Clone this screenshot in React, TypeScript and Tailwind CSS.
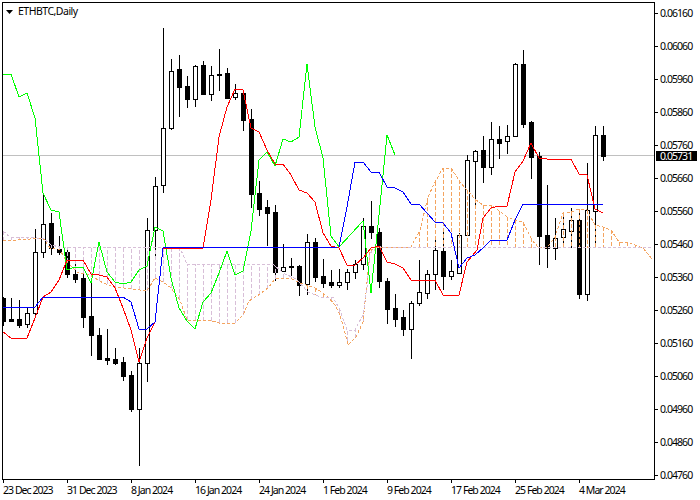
const PRICES = ["0.06160","0.06060","0.05960","0.05860","0.05760","0.05660","0.05560","0.05460","0.05360","0.05260","0.05160","0.05060","0.04960","0.04860","0.04760"];
const DATES = ["23 Dec 2023","31 Dec 2023","8 Jan 2024","16 Jan 2024","24 Jan 2024","1 Feb 2024","9 Feb 2024","17 Feb 2024","25 Feb 2024","4 Mar 2024"];

// high, low, body top, body bottom, black body (1) or white (0), in pixels
const CANDLES: number[][] = [
  [297,326,298,321,1],[298,322,319,321,1],[300,328,319,325,1],[308,328,313,324,0],[229,317,252,313,0],
  [193,258,224,252,0],[213,255,223,248,1],[236,255,249,252,1],[248,278,252,274,1],[260,283,274,279,1],
  [270,328,278,317,1],[283,356,316,335,1],[328,359,335,359,1],[329,365,358,360,1],[348,365,359,363,1],
  [357,381,362,376,1],[371,412,375,409,1],[348,466,363,409,0],[218,382,230,363,0],[177,258,186,230,0],
  [28,193,128,185,0],[59,130,71,128,0],[55,117,69,87,1],[76,108,86,99,1],[65,107,66,99,0],
  [61,95,65,94,1],[66,101,75,94,0],[49,91,74,75,1],[68,99,73,98,1],[84,100,93,97,0],
  [90,131,93,120,1],[109,208,119,194,1],[181,216,193,209,1],[200,246,207,213,1],[205,281,212,272,1],
  [244,272,267,271,0],[258,276,266,267,1],[265,296,266,285,1],[234,295,242,284,0],[238,282,242,277,1],
  [259,288,276,283,1],[270,288,282,285,1],[269,288,282,285,0],[269,290,272,282,0],[260,279,264,272,0],
  [218,270,226,264,0],[201,239,226,232,1],[228,288,232,281,1],[278,324,281,309,1],[294,327,308,319,1],
  [310,336,317,329,1],[301,359,303,329,0],[260,306,292,303,0],[270,299,274,293,0],[236,290,250,274,0],
  [232,290,251,276,1],[260,280,271,276,0],[233,274,235,273,0],[155,236,160,235,0],[150,206,151,161,0],
  [136,183,150,167,1],[122,175,139,167,0],[126,159,139,143,1],[125,154,136,141,0],[63,137,64,136,0],
  [50,128,64,124,1],[121,179,122,157,1],[152,265,156,236,1],[185,268,235,248,1],[218,260,238,248,0],
  [215,247,229,237,0],[208,248,220,231,0],[210,299,220,294,1],[163,301,210,294,0],[126,245,135,211,0],
  [126,161,135,156,1],
];

const GREEN: number[][] = [[3,75],[11,74],[19,97],[27,93],[35,118],[43,193],[51,210],[59,212],[67,270],[75,267],[83,267],[91,283],[99,242],[107,272],[115,282],[123,284],[131,282],[139,270],[147,266],[155,227],[163,231],[171,278],[179,308],[187,321],[195,329],[203,302],[211,293],[219,273],[227,251],[235,275],[243,271],[251,231],[259,160],[267,152],[275,166],[283,139],[291,142],[299,137],[307,64],[315,127],[323,158],[331,236],[339,247],[363,221],[371,293],[379,215],[387,135],[395,155]];
const RED: number[][] = [[3,332],[11,338],[27,338],[35,318],[43,297],[51,292],[59,280],[67,260],[83,260],[91,274],[99,275],[107,277],[115,288],[123,308],[131,330],[139,362],[147,338],[155,322],[163,248],[203,248],[211,200],[219,137],[227,107],[235,89],[243,90],[251,128],[259,132],[267,150],[275,164],[283,164],[291,175],[299,190],[307,193],[315,202],[323,233],[331,246],[339,248],[347,265],[355,265],[363,258],[371,248],[379,246],[387,262],[395,264],[403,268],[411,280],[435,280],[443,295],[459,295],[467,262],[477,250],[483,218],[491,208],[499,206],[507,206],[515,172],[523,161],[531,143],[539,158],[547,159],[571,159],[579,174],[587,175],[595,209],[603,213]];
const BLUE: number[][] = [[3,307],[35,307],[43,297],[123,297],[131,302],[139,329],[147,329],[155,322],[163,248],[339,247],[347,207],[355,162],[363,162],[371,172],[379,172],[387,187],[395,188],[403,192],[411,204],[419,204],[427,213],[435,222],[443,223],[451,233],[459,268],[467,258],[475,255],[483,248],[491,240],[507,240],[515,220],[523,204],[603,204]];
const SPAN_A: number[][] = [[3,241],[43,238],[50,248],[60,250],[67,262],[77,272],[90,275],[103,283],[115,287],[133,289],[147,291],[155,278],[163,282],[170,287],[180,300],[187,320],[212,321],[219,323],[235,323],[243,315],[249,301],[260,294],[268,288],[275,279],[290,278],[300,283],[315,288],[323,293],[328,297],[335,305],[340,315],[345,333],[348,345],[356,337],[363,322],[366,293],[370,250],[379,247],[411,247],[420,230],[428,197],[435,182],[443,168],[451,168],[460,182],[466,189],[476,200],[483,205],[491,205],[507,217],[515,220],[523,222],[532,240],[538,247],[547,248],[555,237],[563,213],[571,212],[579,209],[587,210],[595,225],[603,227],[611,230],[619,242],[627,242],[635,245],[643,248],[652,259]];
const SPAN_B: number[][] = [[3,231],[10,237],[37,238],[43,238],[51,245],[60,247],[180,248],[187,264],[273,264],[283,273],[296,279],[308,292],[320,297],[333,297],[340,310],[347,330],[355,330],[363,315],[367,287],[370,253],[379,247],[652,248]];

const toPoints = (line: number[][]) => line.map((p) => p.join(",")).join(" ");

const yAt = (line: number[][], x: number) => {
  for (let i = 1; i < line.length; i++) {
    if (x <= line[i][0]) {
      const [x0, y0] = line[i - 1];
      const [x1, y1] = line[i];
      return y0 + ((y1 - y0) * (x - x0)) / (x1 - x0);
    }
  }
  return line[line.length - 1][1];
};

const Chart = () => {
  const hatch = Array.from({ length: 81 }, (_, i) => 3 + 8 * i);
  return (
    <svg viewBox="3 3 651 476" shapeRendering="crispEdges" className="block h-[476px] w-[651px]">
      <line x1="3" x2="654" y1="155.5" y2="155.5" stroke="#c0c0c0" />

      {CANDLES.map(([high, low, top, bottom, black], i) => {
        const x = 3 + 8 * i;
        return (
          <g key={i}>
            <line x1={x + 0.5} x2={x + 0.5} y1={high} y2={low} stroke="#000" />
            <rect x={x - 1.5} y={top + 0.5} width="4" height={Math.max(bottom - top, 1)} fill={black ? "#000" : "#fff"} stroke="#000" />
          </g>
        );
      })}

      {hatch.map((x) => {
        const a = yAt(SPAN_A, x);
        const b = yAt(SPAN_B, x);
        return (
          <line key={x} x1={x + 0.5} x2={x + 0.5} y1={a} y2={b} stroke={a < b ? "#f4a460" : "#d8bfd8"} strokeDasharray="4 2" />
        );
      })}

      <polyline points={toPoints(SPAN_A)} fill="none" stroke="#f4a460" strokeDasharray="3 2" />
      <polyline points={toPoints(SPAN_B)} fill="none" stroke="#d8bfd8" strokeDasharray="3 2" />
      <polyline points={toPoints(GREEN)} fill="none" stroke="#00ff00" />
      <polyline points={toPoints(RED)} fill="none" stroke="#ff0000" />
      <polyline points={toPoints(BLUE)} fill="none" stroke="#0000ff" />
    </svg>
  );
};

export default function App() {
  return (
    <div className="flex h-[500px] w-[700px] flex-col overflow-hidden bg-white pt-[2px] pl-[2px] font-['Noto_Sans',sans-serif] text-[10.5px] tracking-[-0.95px] text-black">
      <div className="flex h-[478px]">
        <div className="relative h-[478px] w-[653px] border border-black">
          <Chart />
          <div className="absolute top-[2px] left-[3px] flex items-center gap-[5px] leading-[13px]">
            <svg width="7" height="4" viewBox="0 0 7 4"><polygon points="0,0 7,0 3.5,4" fill="#000" /></svg>
            <span className="tracking-[-0.5px]">ETHBTC,Daily</span>
          </div>
        </div>

        <div className="relative flex flex-col pt-[5px]">
          {PRICES.map((p) => (
            <div key={p} className="flex h-[33px] shrink-0 items-start">
              <div className="mt-[6px] h-px w-[3px] bg-black" />
              <span className="mt-px ml-[2px] leading-[10px]">{p}</span>
            </div>
          ))}
          <div className="absolute top-[149px] left-[1px] flex h-[10px] w-[41px] items-center bg-black pl-[4px] leading-[10px] text-white">0.05731</div>
        </div>
      </div>

      <div className="flex pl-px">
        {DATES.map((d) => (
          <div key={d} className="w-[64px] shrink-0">
            <div className="h-[3px] w-px bg-black" />
            <div className="mt-px whitespace-nowrap leading-[13px]">{d}</div>
          </div>
        ))}
      </div>
    </div>
  );
}
